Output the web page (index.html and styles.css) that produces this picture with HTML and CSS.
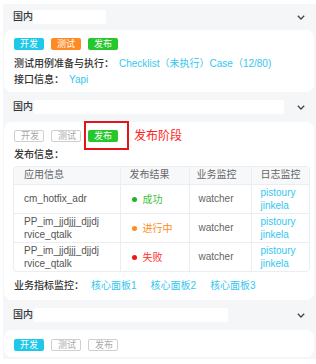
FILE: index.html
```html
<!DOCTYPE html>
<html lang="zh">
<head>
<meta charset="utf-8">
<link rel="stylesheet" href="styles.css">
</head>
<body>
<div class="panel">
  <div class="hd hd--first">
    <span class="hd-title">国内</span>
    <span class="mask mask--a"></span>
    <svg class="chev" width="8" height="5" viewBox="0 0 8 5"><path d="M0.8 0.8 L4 4 L7.2 0.8" fill="none" stroke="#444" stroke-width="1.3"/></svg>
  </div>
  <div class="card card--one">
    <div class="tags">
      <span class="tag tag--cyan">开发</span>
      <span class="tag tag--orange">测试</span>
      <span class="tag tag--green">发布</span>
    </div>
    <div class="line line--first"><span class="label">测试用例准备与执行：</span><span class="link">Checklist（未执行）Case（12/80)</span></div>
    <div class="line"><span class="label">接口信息：</span><span class="link">Yapi</span></div>
  </div>

  <div class="hd">
    <span class="hd-title">国内</span>
    <span class="mask mask--b"></span>
    <svg class="chev" width="8" height="5" viewBox="0 0 8 5"><path d="M0.8 0.8 L4 4 L7.2 0.8" fill="none" stroke="#444" stroke-width="1.3"/></svg>
  </div>
  <div class="card card--two">
    <div class="tags">
      <span class="tag tag--off">开发</span>
      <span class="tag tag--off">测试</span>
      <span class="mark"><span class="tag tag--green">发布</span></span>
      <span class="note">发布阶段</span>
    </div>
    <div class="line line--sec"><span class="label">发布信息：</span></div>
    <div class="tbl-wrap">
      <table class="tbl">
        <thead>
          <tr><th class="c1">应用信息</th><th class="c2">发布结果</th><th class="c3">业务监控</th><th class="c4">日志监控</th></tr>
        </thead>
        <tbody>
          <tr>
            <td class="c1">cm_hotfix_adr</td>
            <td class="c2"><span class="st st--ok"><i class="dot"></i>成功</span></td>
            <td class="c3">watcher</td>
            <td class="c4"><span class="link">pistoury</span><br><span class="link">jinkela</span></td>
          </tr>
          <tr>
            <td class="c1">PP_im_jjdjjj_djjdj<br>rvice_qtalk</td>
            <td class="c2"><span class="st st--run"><i class="dot"></i>进行中</span></td>
            <td class="c3">watcher</td>
            <td class="c4"><span class="link">pistoury</span><br><span class="link">jinkela</span></td>
          </tr>
          <tr>
            <td class="c1">PP_im_jjdjjj_djjdj<br>rvice_qtalk</td>
            <td class="c2"><span class="st st--fail"><i class="dot"></i>失败</span></td>
            <td class="c3">watcher</td>
            <td class="c4"><span class="link">pistoury</span><br><span class="link">jinkela</span></td>
          </tr>
        </tbody>
      </table>
    </div>
    <div class="line line--biz"><span class="label">业务指标监控：</span><span class="boards"><span class="link">核心面板1</span><span class="link">核心面板2</span><span class="link">核心面板3</span></span></div>
  </div>

  <div class="hd">
    <span class="hd-title">国内</span>
    <span class="mask mask--c"></span>
    <svg class="chev" width="8" height="5" viewBox="0 0 8 5"><path d="M0.8 0.8 L4 4 L7.2 0.8" fill="none" stroke="#444" stroke-width="1.3"/></svg>
  </div>
  <div class="card card--three">
    <div class="tags">
      <span class="tag tag--cyan">开发</span>
      <span class="tag tag--off">测试</span>
      <span class="tag tag--off">发布</span>
    </div>
  </div>
</div>
</body>
</html>
```

FILE: styles.css
```css
* { box-sizing: border-box; }
html, body { margin: 0; padding: 0; background: #fff; }
body {
  font-family: "Liberation Sans", "Noto Sans CJK SC", sans-serif;
  font-size: 10px;
  color: #333;
}
.panel {
  margin: 4px 0 0 3px;
  background: #f5f6f8;
  padding: 0 2px 2px 1px;
  width: 313px;
}
.hd {
  height: 30px;
  display: flex;
  align-items: center;
  padding: 0 9px 0 9px;
}
.hd--first { height: 26px; }
.hd-title {
  font-weight: 500;
  color: #333;
  line-height: 14px;
}
.mask {
  display: block;
  height: 14px;
  background: #fff;
}
.mask--a { width: 73px; }
.mask--b { width: 250px; margin-left: 1px; }
.mask--c { width: 194px; margin-left: 1px; }
.chev { margin-left: auto; display: block; }

.card {
  background: #fff;
  border-radius: 8px;
  padding: 8px 4px 4px 10px;
}
.card--two { padding-bottom: 6px; }
.card--three { padding: 9px 4px 6px 10px; }

.tags {
  display: flex;
  align-items: center;
  gap: 7px;
  height: 12px;
}
.tag {
  display: block;
  height: 12px;
  line-height: 12px;
  padding: 0 6px;
  font-size: 9px;
  border-radius: 2px;
  color: #fff;
  width: 30px;
  text-align: center;
  white-space: nowrap;
}
.tag--cyan { background: #1dc8e8; }
.tag--orange { background: #ff8a22; }
.tag--green { background: #26c72c; }
.tag--off {
  background: #fff;
  color: #a8a8a8;
  border: 1px solid #cfcfcf;
  line-height: 10px;
}
.mark { position: relative; display: block; }
.mark::after {
  content: "";
  position: absolute;
  left: -4px;
  top: -9px;
  width: 41px;
  height: 25px;
  border: 2px solid #e3141c;
}
.note {
  margin-left: 9px;
  color: #ff2020;
  font-size: 12px;
  line-height: 14px;
}

.line {
  line-height: 16px;
  white-space: nowrap;
}
.line--first { margin-top: 6px; }
.line--sec { margin-top: 5px; }
.line--biz { margin-top: 6px; }
.label { font-weight: 500; color: #333; }
.link { color: #35c6ef; }
.line .label + .link { margin-left: 5px; }
.boards { display: inline-flex; gap: 14px; margin-left: 7px; }

.tbl-wrap {
  margin-top: 3px;
  margin-left: -1px;
  width: 297px;
  border: 1px solid #ebedf0;
  border-radius: 4px;
  overflow: hidden;
}
.tbl {
  width: 100%;
  border-collapse: collapse;
  table-layout: fixed;
}
.tbl th, .tbl td {
  text-align: left;
  padding: 0 0 0 9px;
  border-left: 1px solid #ebedf0;
  vertical-align: middle;
}
.tbl th:first-child, .tbl td:first-child { border-left: 0; }
.tbl th {
  height: 17px;
  background: #f7f8fa;
  font-weight: 400;
  color: #666;
  line-height: 12px;
}
.tbl td {
  height: 29px;
  border-top: 1px solid #ebedf0;
  line-height: 13px;
  color: #555;
}
.tbl .c1 { width: 106px; padding-left: 10px; }
.tbl .c2 { width: 69px; }
.tbl td.c2 { padding-left: 11px; }
.tbl .c3 { width: 62px; }
.tbl th.c3 { padding-left: 7px; }
.tbl td.c3 { color: #666; }
.tbl .c4 { width: 60px; }
.st { display: inline-flex; align-items: center; }
.dot {
  display: block;
  width: 5px;
  height: 5px;
  border-radius: 50%;
  margin-right: 6px;
}
.st--ok { color: #3bc43b; }
.st--ok .dot { background: #1fb51f; }
.st--run { color: #ff8c1a; }
.st--run .dot { background: #ff8c1a; }
.st--fail { color: #ff2d2d; }
.st--fail .dot { background: #f5141a; }
```
